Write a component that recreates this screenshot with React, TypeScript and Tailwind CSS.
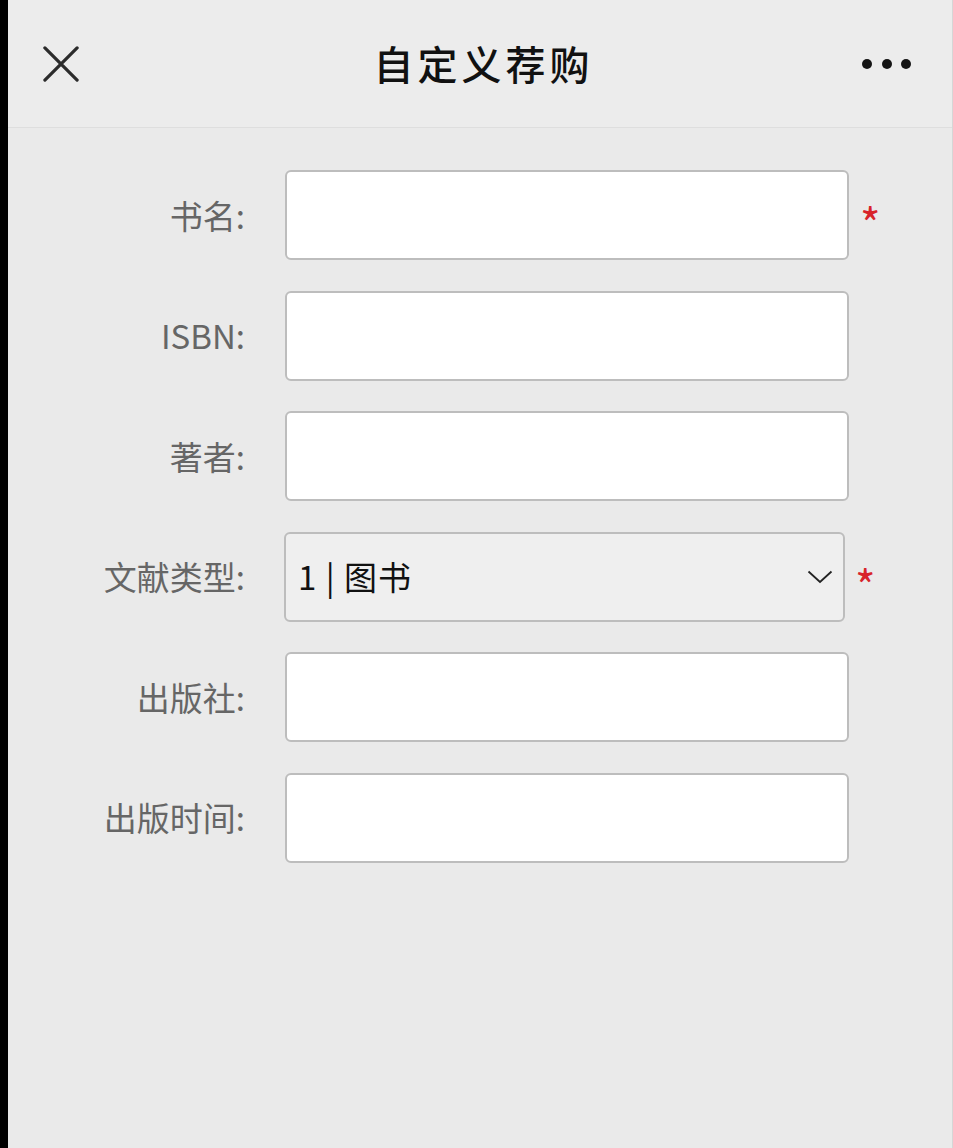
const fields = [
  { label: "书名:", required: true },
  { label: "ISBN:", required: false },
  { label: "著者:", required: false },
  { label: "文献类型:", required: true, select: "1 | 图书" },
  { label: "出版社:", required: false },
  { label: "出版时间:", required: false },
];

const sans = "font-['Noto_Sans_CJK_SC','Noto_Sans',sans-serif]";

export default function App() {
  return (
    <div className={`flex h-[1148px] w-[953px] overflow-hidden bg-black ${sans}`}>
      <div className="w-[8px] shrink-0 bg-black" />
      <div className="flex flex-1 flex-col bg-[#eaeaea] border-r border-[#d6d6d6]">
        {/* header */}
        <div className="flex h-[128px] shrink-0 items-center border-b border-[#dedede] bg-[#ececec]">
          <div className="ml-[35px] flex h-[36px] w-[36px] items-center justify-center">
            <svg width="38" height="38" viewBox="0 0 38 38" fill="none">
              <path d="M2 2 L36 36 M36 2 L2 36" stroke="#2b2b2b" strokeWidth="3.4" strokeLinecap="round" />
            </svg>
          </div>
          <div className="flex-1 pl-[26px] pb-[2px] text-center text-[40px] font-medium tracking-[4px] text-[#111]">
            自定义荐购
          </div>
          <div className="mr-[41px] flex items-center gap-[9.5px]">
            <span className="h-[10px] w-[10px] rounded-full bg-[#151515]" />
            <span className="h-[10px] w-[10px] rounded-full bg-[#151515]" />
            <span className="h-[10px] w-[10px] rounded-full bg-[#151515]" />
          </div>
        </div>

        {/* form */}
        <div className="flex flex-col gap-[30.6px] pt-[42px]">
          {fields.map((f) => (
            <div key={f.label} className="flex h-[90px] items-center">
              <div className="w-[237px] shrink-0 text-right text-[33px] leading-none text-[#666]">{f.label}</div>
              {f.select ? (
                <div className="ml-[39px] flex h-[90px] w-[561px] items-center rounded-[6px] border-2 border-[#bdbdbd] bg-[#efefef] pl-[12px] pr-[10px]">
                  <span className="flex-1 text-[33px] tracking-[1px] text-[#111]">{f.select}</span>
                  <svg width="26" height="14" viewBox="0 0 26 14" fill="none">
                    <path d="M1.5 1.5 L13 12 L24.5 1.5" stroke="#222" strokeWidth="1.8" />
                  </svg>
                </div>
              ) : (
                <div className="ml-[40px] h-[90px] w-[564px] rounded-[6px] border-2 border-[#bdbdbd] bg-white" />
              )}
              {f.required && (
                <span className={`${f.select ? "ml-[10px]" : "ml-[11px]"} mt-[14px] text-[44px] leading-none text-[#d8232a]`}>*</span>
              )}
            </div>
          ))}
        </div>
      </div>
    </div>
  );
}
